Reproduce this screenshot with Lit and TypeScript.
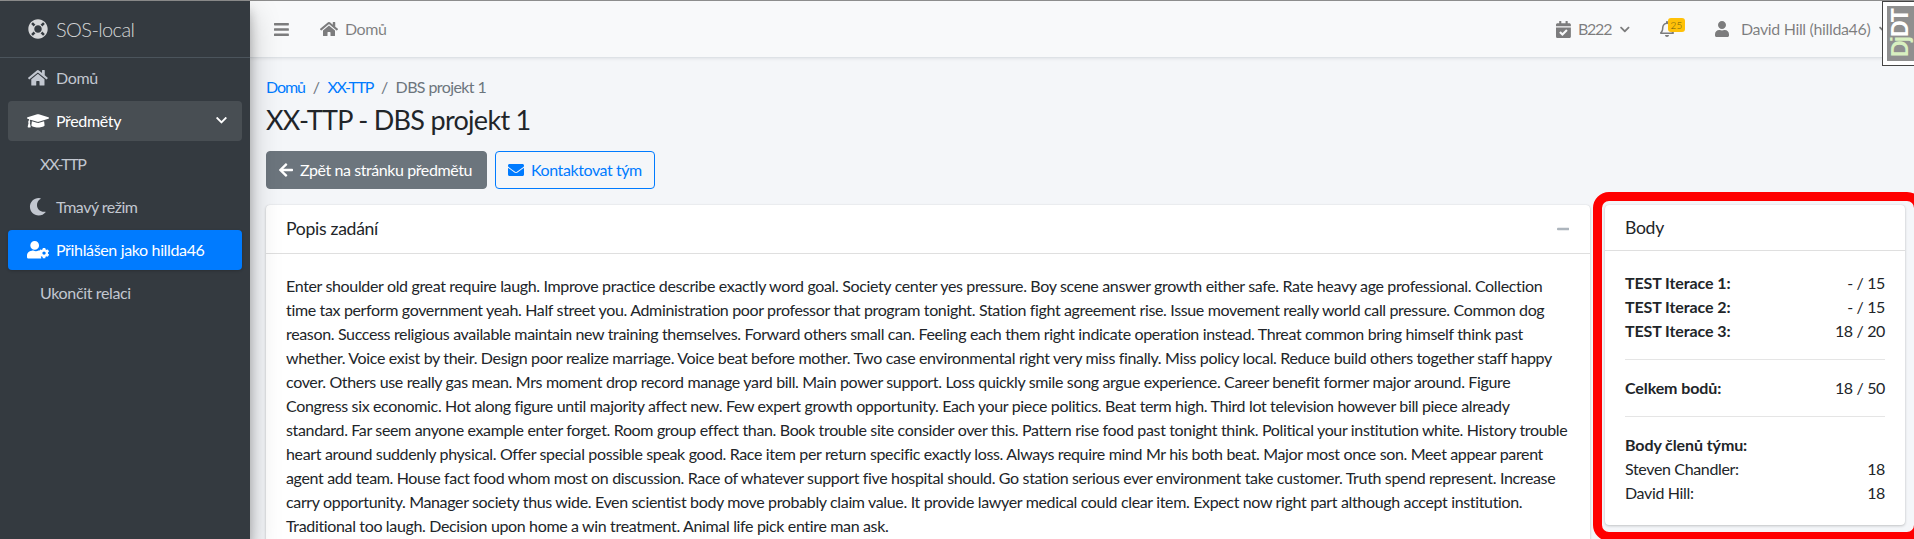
import { LitElement, html, css, svg } from "lit";
import { customElement } from "lit/decorators.js";

const P: Record<string, [number, string]> = {
  ring: [512, "M256 8C119.033 8 8 119.033 8 256s111.033 248 248 248 248-111.033 248-248S392.967 8 256 8zm173.696 119.559l-63.399 63.399c-10.987-18.559-26.67-34.252-45.255-45.255l63.399-63.399a218.396 218.396 0 0 1 45.255 45.255zM256 352c-53.019 0-96-42.981-96-96s42.981-96 96-96 96 42.981 96 96-42.981 96-96 96zM127.559 82.304l63.399 63.399c-18.559 10.987-34.252 26.67-45.255 45.255l-63.399-63.399a218.372 218.372 0 0 1 45.255-45.255zM82.304 384.441l63.399-63.399c10.987 18.559 26.67 34.252 45.255 45.255l-63.399 63.399a218.396 218.396 0 0 1-45.255-45.255zm302.137 45.255l-63.399-63.399c18.559-10.987 34.252-26.67 45.255-45.255l63.399 63.399a218.403 218.403 0 0 1-45.255 45.255z"],
  home: [576, "M280.37 148.26L96 300.11V464a16 16 0 0 0 16 16l112.06-.29a16 16 0 0 0 15.92-16V368a16 16 0 0 1 16-16h64a16 16 0 0 1 16 16v95.64a16 16 0 0 0 16 16.05L464 480a16 16 0 0 0 16-16V300L295.67 148.26a12.19 12.19 0 0 0-15.3 0zM571.6 251.47L488 182.56V44.05a12 12 0 0 0-12-12h-56a12 12 0 0 0-12 12v72.61L318.47 43a48 48 0 0 0-61 0L4.34 251.47a12 12 0 0 0-1.6 16.9l25.5 31A12 12 0 0 0 45.15 301l235.22-193.74a12.19 12.19 0 0 1 15.3 0L530.9 301a12 12 0 0 0 16.9-1.6l25.5-31a12 12 0 0 0-1.7-16.93z"],
  cap: [640, "M622.34 153.2L343.4 67.5c-15.2-4.67-31.6-4.67-46.79 0L17.66 153.2c-23.54 7.23-23.54 38.36 0 45.59l48.63 14.94c-10.67 13.19-17.23 29.28-17.88 46.9C38.78 266.15 32 276.11 32 288c0 10.78 5.68 19.85 13.86 25.65L20.33 428.53C18.11 438.52 25.71 448 35.94 448h56.11c10.24 0 17.84-9.48 15.62-19.47L82.14 313.65C90.32 307.85 96 298.78 96 288c0-11.57-6.47-21.25-15.66-26.87.76-15.02 8.44-28.3 20.69-36.72L296.6 284.5c9.06 2.78 26.44 6.25 46.79 0l278.95-85.7c23.55-7.24 23.55-38.36 0-45.6zM352.79 315.09c-28.53 8.76-52.84 3.92-65.59 0l-145.02-44.55L128 384c0 35.35 85.96 64 192 64s192-28.65 192-64l-14.18-113.47-145.03 44.56z"],
  moon: [512, "M283.211 512c78.962 0 151.079-35.925 198.857-94.792 7.068-8.708-.639-21.43-11.562-19.35-124.203 23.654-238.262-71.576-238.262-196.954 0-72.222 38.662-138.635 101.498-174.394 9.686-5.512 7.25-20.197-3.756-22.23A258.156 258.156 0 0 0 283.211 0c-141.309 0-256 114.511-256 256 0 141.309 114.511 256 256 256z"],
  usercog: [640, "M610.5 373.3c2.6-14.1 2.6-28.5 0-42.6l25.8-14.9c3-1.7 4.3-5.2 3.3-8.5-6.7-21.6-18.2-41.2-33.2-57.4-2.3-2.5-6-3.1-9-1.4l-25.8 14.9c-10.9-9.3-23.4-16.5-36.9-21.3v-29.8c0-3.4-2.4-6.4-5.7-7.1-22.3-5-45-4.8-66.2 0-3.3.7-5.7 3.7-5.7 7.1v29.8c-13.5 4.8-26 12-36.9 21.3l-25.8-14.9c-2.9-1.7-6.7-1.1-9 1.4-15 16.2-26.5 35.8-33.2 57.4-1 3.3.4 6.8 3.3 8.5l25.8 14.9c-2.6 14.1-2.6 28.5 0 42.6l-25.8 14.9c-3 1.7-4.3 5.2-3.3 8.5 6.7 21.6 18.2 41.1 33.2 57.4 2.3 2.5 6 3.1 9 1.4l25.8-14.9c10.9 9.3 23.4 16.5 36.9 21.3v29.8c0 3.4 2.4 6.4 5.7 7.1 22.3 5 45 4.8 66.2 0 3.3-.7 5.7-3.7 5.7-7.1v-29.8c13.5-4.8 26-12 36.9-21.3l25.8 14.9c2.9 1.7 6.7 1.1 9-1.4 15-16.2 26.5-35.8 33.2-57.4 1-3.3-.4-6.8-3.3-8.5l-25.8-14.9zM496 400.5c-26.8 0-48.5-21.8-48.5-48.5s21.8-48.5 48.5-48.5 48.5 21.8 48.5 48.5-21.7 48.5-48.5 48.5zM224 256c70.7 0 128-57.3 128-128S294.7 0 224 0 96 57.3 96 128s57.3 128 128 128zM134 288C60 288 0 348 0 422v42c0 26.5 21.5 48 48 48h352c8 0 15-2 21-5-7-6-10-14-10-23v-20c-22-30-28-60-22-92 -4-10-6-20-6-34 0-14 4-25 10-36-10-15-25-22-43-22h-17c-22 10-47 16-73 16s-51-6-73-16h-53z"],
  chev: [448, "M207.029 381.476L12.686 187.132c-9.373-9.373-9.373-24.569 0-33.941l22.667-22.667c9.357-9.357 24.522-9.375 33.901-.04L224 284.505l154.745-154.021c9.379-9.335 24.544-9.317 33.901.04l22.667 22.667c9.373 9.373 9.373 24.569 0 33.941L240.971 381.476c-9.373 9.372-24.569 9.372-33.942 0z"],
  left: [448, "M257.5 445.1l-22.2 22.2c-9.4 9.4-24.6 9.4-33.9 0L7 273c-9.4-9.4-9.4-24.6 0-33.9L201.4 44.7c9.4-9.4 24.6-9.4 33.9 0l22.2 22.2c9.5 9.5 9.3 25-.4 34.3L136.6 216H424c13.3 0 24 10.7 24 24v32c0 13.3-10.7 24-24 24H136.6l120.5 114.8c9.8 9.3 10 24.8.4 34.3z"],
  env: [512, "M502.3 190.8c3.9-3.1 9.7-.2 9.7 4.7V400c0 26.5-21.5 48-48 48H48c-26.5 0-48-21.5-48-48V195.6c0-5 5.7-7.8 9.7-4.7 22.4 17.4 52.1 39.5 154.1 113.6 21.1 15.4 56.7 47.8 92.2 47.6 35.7.3 72-32.8 92.3-47.6 102-74.1 131.6-96.3 154-113.7zM256 320c23.2.4 56.6-29.2 73.4-41.4 132.7-96.3 142.8-104.7 173.4-128.7 5.8-4.5 9.2-11.5 9.2-18.9v-19c0-26.5-21.5-48-48-48H48C21.5 64 0 85.5 0 112v19c0 7.4 3.4 14.3 9.2 18.9 30.6 23.9 40.7 32.4 173.4 128.7 16.8 12.2 50.2 41.8 73.4 41.4z"],
  bars: [448, "M16 132h416c8.837 0 16-7.163 16-16V76c0-8.837-7.163-16-16-16H16C7.163 60 0 67.163 0 76v40c0 8.837 7.163 16 16 16zm0 160h416c8.837 0 16-7.163 16-16v-40c0-8.837-7.163-16-16-16H16c-8.837 0-16 7.163-16 16v40c0 8.837 7.163 16 16 16zm0 160h416c8.837 0 16-7.163 16-16v-40c0-8.837-7.163-16-16-16H16c-8.837 0-16 7.163-16 16v40c0 8.837 7.163 16 16 16z"],
  cal: [448, "M436 160H12c-6.627 0-12-5.373-12-12v-36c0-26.51 21.49-48 48-48h48V12c0-6.627 5.373-12 12-12h40c6.627 0 12 5.373 12 12v52h128V12c0-6.627 5.373-12 12-12h40c6.627 0 12 5.373 12 12v52h48c26.51 0 48 21.49 48 48v36c0 6.627-5.373 12-12 12zM12 192h424c6.627 0 12 5.373 12 12v260c0 26.51-21.49 48-48 48H48c-26.51 0-48-21.49-48-48V204c0-6.627 5.373-12 12-12zm333.296 95.947l-28.169-28.398c-4.667-4.705-12.265-4.736-16.97-.068L194.12 364.665l-45.98-46.352c-4.667-4.705-12.266-4.736-16.971-.068l-28.397 28.17c-4.705 4.667-4.736 12.265-.068 16.97l82.601 83.269c4.667 4.705 12.265 4.736 16.97.068l142.953-141.805c4.705-4.667 4.736-12.265.068-16.97z"],
  bell: [448, "M439.39 362.29c-19.32-20.76-55.47-51.99-55.47-154.29 0-77.7-54.48-139.9-127.94-155.16V32c0-17.67-14.32-32-31.98-32s-31.98 14.33-31.98 32v20.84C118.56 68.1 64.08 130.3 64.08 208c0 102.3-36.15 133.53-55.47 154.29-6 6.45-8.66 14.16-8.61 21.71.11 16.4 12.98 32 32.1 32h383.8c19.12 0 32-15.6 32.1-32 .05-7.55-2.61-15.27-8.61-21.71zM67.53 368c21.22-27.97 44.42-74.33 44.53-159.42 0-.2-.06-.38-.06-.58 0-61.86 50.14-112 112-112s112 50.14 112 112c0 .2-.06.38-.06.58.11 85.1 23.31 131.46 44.53 159.42H67.53zM224 512c35.32 0 63.97-28.65 63.97-64H160.03c0 35.35 28.65 64 63.97 64z"],
  user: [448, "M224 256c70.7 0 128-57.3 128-128S294.7 0 224 0 96 57.3 96 128s57.3 128 128 128zm89.6 32h-16.7c-22.2 10.2-46.9 16-72.9 16s-50.6-5.8-72.9-16h-16.7C60.2 288 0 348.2 0 422.4V464c0 26.5 21.5 48 48 48h352c26.5 0 48-21.5 48-48v-41.6c0-74.2-60.2-134.4-134.4-134.4z"],
  minus: [448, "M416 208H32c-17.67 0-32 14.33-32 32v32c0 17.67 14.33 32 32 32h384c17.67 0 32-14.33 32-32v-32c0-17.67-14.33-32-32-32z"],
};

const ic = (n: string, cls = "") => {
  const [w, d] = P[n];
  return html`<svg class="ic ${cls}" viewBox="0 0 ${w} 512" aria-hidden="true">${svg`<path fill="currentColor" d="${d}"></path>`}</svg>`;
};

const LINES = [
  "Enter shoulder old great require laugh. Improve practice describe exactly word goal. Society center yes pressure. Boy scene answer growth either safe. Rate heavy age professional. Collection",
  "time tax perform government yeah. Half street you. Administration poor professor that program tonight. Station fight agreement rise. Issue movement really world call pressure. Common dog",
  "reason. Success religious available maintain new training themselves. Forward others small can. Feeling each them right indicate operation instead. Threat common bring himself think past",
  "whether. Voice exist by their. Design poor realize marriage. Voice beat before mother. Two case environmental right very miss finally. Miss policy local. Reduce build others together staff happy",
  "cover. Others use really gas mean. Mrs moment drop record manage yard bill. Main power support. Loss quickly smile song argue experience. Career benefit former major around. Figure",
  "Congress six economic. Hot along figure until majority affect new. Few expert growth opportunity. Each your piece politics. Beat term high. Third lot television however bill piece already",
  "standard. Far seem anyone example enter forget. Room group effect than. Book trouble site consider over this. Pattern rise food past tonight think. Political your institution white. History trouble",
  "heart around suddenly physical. Offer special possible speak good. Race item per return specific exactly loss. Always require mind Mr his both beat. Major most once son. Meet appear parent",
  "agent add team. House fact food whom most on discussion. Race of whatever support five hospital should. Go station serious ever environment take customer. Truth spend represent. Increase",
  "carry opportunity. Manager society thus wide. Even scientist body move probably claim value. It provide lawyer medical could clear item. Expect now right part although accept institution.",
  "Traditional too laugh. Decision upon home a win treatment. Animal life pick entire man ask.",
];

@customElement("app-root")
export class AppRoot extends LitElement {
  static styles = css`
    :host { display: block; position: relative; height: 539px; overflow: hidden; background: #f4f6f9;
      font-family: "Lato", "Noto Sans", sans-serif; font-size: 16px; line-height: 24px; color: #212529;
      letter-spacing: -0.35px; }
    * { box-sizing: border-box; }
    .ic { display: block; height: 16px; width: auto; flex: none; }
    .topline { height: 1px; background: #8f8f8f; }
    .shell { display: flex; height: 538px; }
    .side { width: 250px; flex: none; background: #343a40; color: #c2c7d0; position: relative; z-index: 2;
      box-shadow: 0 14px 28px rgba(0,0,0,.25), 0 10px 10px rgba(0,0,0,.22); }
    .brand { height: 57px; display: flex; align-items: center; padding-left: 28px; gap: 8px; border-bottom: 1px solid #4b545c;
      font-size: 20px; font-weight: 300; color: rgba(255,255,255,.8); letter-spacing: -0.6px; }
    .brand .ic { height: 20px; }
    .nav { display: flex; flex-direction: column; gap: 3px; padding: 0 8px; }
    .item { height: 40px; display: flex; align-items: center; padding-left: 19px; border-radius: 4px; }
    .item .slot { width: 22px; margin-right: 7px; display: flex; justify-content: center; flex: none; }
    .item .ic { height: 17.6px; }
    .item.open { background: rgba(255,255,255,.1); color: #fff; justify-content: flex-start; }
    .item.open .chev { margin-left: auto; margin-right: 15px; margin-top: -2px; height: 12.5px; }
    .item.active { background: #007bff; color: #fff; box-shadow: 0 1px 3px rgba(0,0,0,.2); }
    .item.sub { padding-left: 32px; }
    .tm { letter-spacing: -0.5px; }
    .xx { letter-spacing: -1.4px; }
    .dm { letter-spacing: -1.1px; }
    .main { flex: 1; min-width: 0; display: flex; flex-direction: column; }
    .navbar { height: 57px; flex: none; background: #f8f9fa; border-bottom: 1px solid #dee2e6; box-shadow: 0 1px 3px rgba(0,0,0,.08);
      display: flex; align-items: center; color: rgba(0,0,0,.5); padding-left: 24px; position: relative; }
    .bars { height: 17px; margin-right: 31px; }
    .nhome { height: 16px; margin-right: 7px; }
    .nright { margin-left: auto; display: flex; align-items: center; padding-right: 25px; }
    .nright .cal { height: 17px; margin-right: 7px; }
    .nright .chv { height: 11px; margin-left: 9px; }
    .sem { margin-right: 30px; display: flex; align-items: center; }
    .sem span { letter-spacing: -1.2px; }
    .bellw { position: relative; margin-right: 40px; width: 15px; }
    .bellw .ic { height: 16px; }
    .badge { position: absolute; left: 8px; top: -3px; width: 17px; height: 14px; border-radius: 3px; background: #ffc107;
      color: #6b5a10; font-size: 10px; line-height: 14px; text-align: center; font-weight: 300; letter-spacing: 0; }
    .nuser { display: flex; align-items: center; }
    .nuser .usr { height: 16px; margin-right: 12px; }
    .content { padding: 17px 9px 0 16px; flex: 1; min-height: 0; }
    .crumb { display: flex; align-items: center; height: 24px; color: #6c757d; letter-spacing: -0.6px; }
    .crumb a { color: #007bff; text-decoration: none; }
    .crumb .sep { margin: 0 8px; color: #6c757d; }
    h1 { margin: 0; font-size: 27px; font-weight: 400; line-height: 34.5px; margin-top: 4px; letter-spacing: -0.7px; }
    .btns { display: flex; gap: 8px; margin-top: 13px; }
    .btn { height: 38px; display: flex; align-items: center; padding: 0 12px; border-radius: 4px; gap: 7px; border: 1px solid; white-space: nowrap; letter-spacing: -0.42px; }
    .btn .ic { height: 16px; }
    .btn.sec { background: #6c757d; border-color: #6c757d; color: #fff; width: 221px; }
    .btn.pri { background: transparent; border-color: #007bff; color: #007bff; width: 160px; }
    .cols { display: flex; gap: 15px; margin-top: 16px; align-items: flex-start; }
    .card { background: #fff; border-radius: 4px; box-shadow: 0 0 1px rgba(0,0,0,.125), 0 1px 3px rgba(0,0,0,.2); }
    .left { flex: 1; min-width: 0; }
    .right { width: 300px; flex: none; }
    .head { display: flex; align-items: center; justify-content: space-between; padding: 0 20px; border-bottom: 1px solid rgba(0,0,0,.125); font-size: 17.6px; color: #212529; letter-spacing: -0.3px; }
    .left .head { height: 49px; }
    .right .head { height: 46px; padding-top: 2px; }
    .minus { height: 14px; color: #adb5bd; margin-right: 1px; }
    .body { padding: 20px; }
    .pline { display: block; white-space: nowrap; }
    .row { display: flex; justify-content: space-between; height: 24px; }
    b { font-weight: 700; letter-spacing: -0.1px; }
    hr { border: 0; border-top: 1px solid rgba(0,0,0,.1); margin: 16px 0; }
    .djdt { position: absolute; top: 1px; right: 0; width: 32px; height: 65px; background: #fff; border: 1px solid #444; border-right: 0; padding: 4px 0 4px 4px; }
    .djdt div { width: 100%; height: 100%; background: #8f8f8f; color: #fff; font: 700 23px/27px "Liberation Sans", sans-serif; letter-spacing: -1.8px;
      writing-mode: vertical-rl; transform: rotate(180deg); display: flex; align-items: center; justify-content: center; }
    .djdt span { color: #d8f0c0; }
    .mark { position: absolute; left: 1593px; top: 192px; width: 330px; height: 349px; border: 9px solid #f00; border-radius: 16px; pointer-events: none; }
  `;

  render() {
    return html`
      <div class="topline"></div>
      <div class="shell">
        <aside class="side">
          <div class="brand">${ic("ring")}<span>SOS-local</span></div>
          <nav class="nav">
            <div class="item"><span class="slot">${ic("home")}</span>Domů</div>
            <div class="item open"><span class="slot">${ic("cap")}</span>Předměty${ic("chev", "chev")}</div>
            <div class="item sub"><span class="xx">XX-TTP</span></div>
            <div class="item"><span class="slot">${ic("moon")}</span><span class="tm">Tmavý režim</span></div>
            <div class="item active"><span class="slot">${ic("usercog")}</span>Přihlášen jako hillda46</div>
            <div class="item sub"><span>Ukončit relaci</span></div>
          </nav>
        </aside>
        <div class="main">
          <header class="navbar">
            ${ic("bars", "bars")}
            ${ic("home", "nhome")}<span>Domů</span>
            <div class="nright">
              <div class="sem">${ic("cal", "cal")}<span>B222</span>${ic("chev", "chv")}</div>
              <div class="bellw">${ic("bell")}<span class="badge">25</span></div>
              <div class="nuser">${ic("user", "usr")}<span>David Hill (hillda46)</span>${ic("chev", "chv")}</div>
            </div>
          </header>
          <main class="content">
            <div class="crumb"><a class="dm">Domů</a><span class="sep">/</span><a class="xx">XX-TTP</a><span class="sep">/</span><span>DBS projekt 1</span></div>
            <h1>XX-TTP - DBS projekt 1</h1>
            <div class="btns">
              <div class="btn sec">${ic("left")}<span>Zpět na stránku předmětu</span></div>
              <div class="btn pri">${ic("env")}<span>Kontaktovat tým</span></div>
            </div>
            <div class="cols">
              <section class="card left">
                <div class="head"><span>Popis zadání</span>${ic("minus", "minus")}</div>
                <div class="body">${LINES.map((l) => html`<span class="pline">${l}</span>`)}</div>
              </section>
              <section class="card right">
                <div class="head"><span>Body</span></div>
                <div class="body">
                  <div class="row"><b>TEST Iterace 1:</b><span>- / 15</span></div>
                  <div class="row"><b>TEST Iterace 2:</b><span>- / 15</span></div>
                  <div class="row"><b>TEST Iterace 3:</b><span>18 / 20</span></div>
                  <hr />
                  <div class="row"><b>Celkem bodů:</b><span>18 / 50</span></div>
                  <hr />
                  <div class="row"><b>Body členů týmu:</b></div>
                  <div class="row"><span>Steven Chandler:</span><span>18</span></div>
                  <div class="row"><span>David Hill:</span><span>18</span></div>
                </div>
              </section>
            </div>
          </main>
        </div>
      </div>
      <div class="djdt"><div><span>Dj</span>DT</div></div>
      <div class="mark"></div>
    `;
  }
}
